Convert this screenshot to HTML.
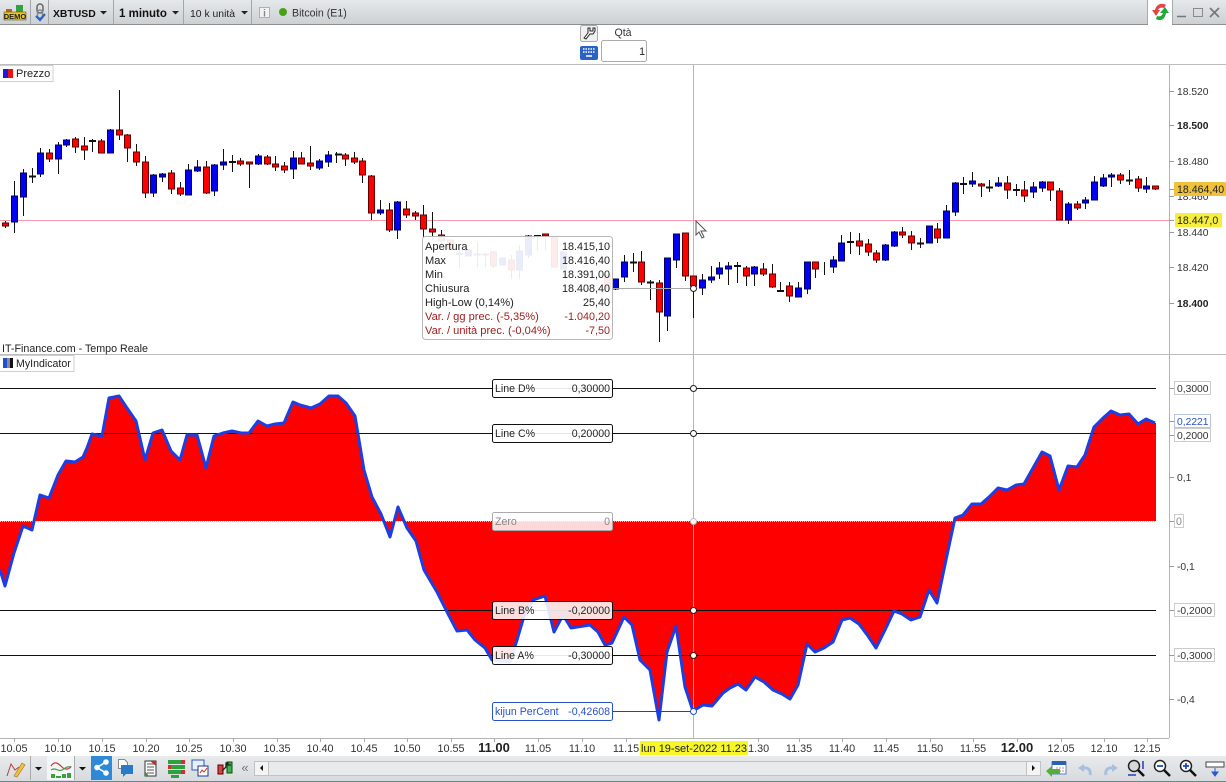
<!DOCTYPE html>
<html><head><meta charset="utf-8"><title>XBTUSD</title>
<style>
html,body{margin:0;padding:0;background:#fff;width:1226px;height:782px;overflow:hidden}
svg{display:block}
text{font-family:"Liberation Sans",sans-serif;font-size:10.6px;fill:#222}
.a{font-size:10.3px;fill:#333}
.t{text-anchor:middle;fill:#333;font-size:10.8px}
.b{font-weight:bold;font-size:13px;fill:#222}
.r{text-anchor:end}
.l{font-size:11.1px}
.v{font-size:10.8px;text-anchor:end}
.red{fill:#a02020}
</style></head><body>
<svg width="1226" height="782" viewBox="0 0 1226 782" xmlns="http://www.w3.org/2000/svg">
<defs>
<linearGradient id="g" x1="0" y1="0" x2="0" y2="1"><stop offset="0" stop-color="#e6e9eb"/><stop offset="1" stop-color="#cdd1d4"/></linearGradient>
<linearGradient id="g2" x1="0" y1="0" x2="0" y2="1"><stop offset="0" stop-color="#e8eaec"/><stop offset="1" stop-color="#d8dbde"/></linearGradient>
</defs>
<rect width="1226" height="782" fill="#fff"/>

<!-- top bar -->
<rect x="0" y="0" width="1226" height="24" fill="url(#g)"/>
<rect x="0" y="24" width="1226" height="1" fill="#8c8f91"/>
<path d="M30.500 0V24M48.500 0V24M113.500 0V24M183.500 0V24M251.500 0V24" stroke="#a4a7aa" fill="none"/>
<rect x="1148" y="0" width="24" height="26" fill="#fff"/>
<path d="M1147.500 0V24M1172.500 0V24" stroke="#a8abae"/>
<!-- demo logo -->
<rect x="6" y="9" width="6" height="5" fill="#a86a30"/><rect x="16" y="5" width="7" height="7" fill="#35a040"/>
<rect x="4" y="12" width="22" height="8" fill="#e8c428" stroke="#6a5a10" stroke-width=".6"/>
<text x="15" y="19" text-anchor="middle" style="font-size:7.500px;font-weight:bold;fill:#222">DEMO</text>
<!-- chain icon -->
<rect x="37" y="4" width="6" height="9" rx="3" fill="none" stroke="#666" stroke-width="1.500"/>
<rect x="37.500" y="10" width="5" height="8" rx="2.500" fill="none" stroke="#888" stroke-width="1.500"/>
<path d="M36 16l4 4 5-6" fill="none" stroke="#2e62c0" stroke-width="2.200"/>
<text x="53" y="17" style="font-weight:bold;fill:#111;font-size:10.400px">XBTUSD</text>
<path d="M100 11h7l-3.500 3.500z" fill="#222"/>
<text x="119" y="17" style="font-weight:bold;fill:#111;font-size:11.500px">1 minuto</text>
<path d="M172 11h7l-3.500 3.500z" fill="#222"/>
<text x="190" y="17" style="fill:#222;font-size:10.400px">10 k unità</text>
<path d="M241 11h7l-3.500 3.500z" fill="#222"/>
<rect x="259.500" y="7.500" width="10" height="10" fill="#f2f2f2" stroke="#b0b0b0"/>
<text x="264.500" y="16.500" text-anchor="middle" style="font-size:10px;font-weight:bold;fill:#888">i</text>
<circle cx="283" cy="12" r="4" fill="#4aa018"/>
<text x="292" y="16.500" style="fill:#333">Bitcoin (E1)</text>
<!-- refresh icon -->
<path d="M1166 5c-5-3-10 0-11 5l-3 0 4 6 4-6-2 0c1-2 3-3 6-2z" fill="#e04848"/>
<path d="M1156 19c5 3 9 0 10-6l3 0-4-6-5 6 3 0c-1 3-3 4-6 3z" fill="#22a83a"/>
<!-- window buttons -->
<path d="M1177 16.500h9" stroke="#777" stroke-width="1.500"/>
<rect x="1193.500" y="8.500" width="9" height="8" fill="none" stroke="#8a8a8a"/>
<path d="M1210 8l9 9M1219 8l-9 9" stroke="#777" stroke-width="1.700"/>

<!-- wrench / qty -->
<rect x="580.500" y="25.500" width="17" height="16" rx="2" fill="#f0f0f0" stroke="#aaa"/>
<path d="M584 38l4-5v-5h2v3h3v-3h2v3l-2 3h-3l-4 5z" fill="#fff" stroke="#222" stroke-width="1"/>
<text x="623" y="36" text-anchor="middle" style="fill:#333">Qtà</text>
<rect x="580" y="46" width="18" height="14" rx="2" fill="#2c62c4"/>
<path d="M583 49h12M583 52h12" stroke="#fff" stroke-width="1.500" stroke-dasharray="1.500 1"/><path d="M586 56h6" stroke="#fff" stroke-width="1.500"/>
<rect x="601.500" y="40.500" width="45" height="21" rx="2" fill="#fff" stroke="#aaa"/>
<text x="645" y="55" class="r" style="fill:#222">1</text>

<!-- frames -->
<path d="M0 64.500H1226M0 354.500H1226" stroke="#bdbdbd"/>
<path d="M1169.500 65V738M0 738.500H1169" stroke="#b4b4b4"/>
<path d="M1169 91.500h5M1169 125.500h5M1169 161.500h5M1169 196.500h5M1169 189.500h5M1169 232.500h5M1169 267.500h5M1169 303.500h5M1169 220.500h5M1169 388.500h5M1169 421.500h5M1169 435.500h5M1169 477.500h5M1169 521.500h5M1169 566.500h5M1169 610.500h5M1169 655.500h5M1169 699.500h5" stroke="#999"/>

<!-- price panel tags -->
<rect x="-1" y="65.500" width="54" height="16" fill="#fff" stroke="#cfcfcf"/>
<rect x="3" y="69" width="5" height="9" fill="#1a1ae0"/><rect x="8" y="69" width="5" height="9" fill="#f01010"/>
<text x="16" y="77" style="font-size:11px">Prezzo</text>

<!-- crosshair -->
<path d="M0 220.500H1169" stroke="#f59aaa"/>
<path d="M693.500 65V738" stroke="#f59aaa"/>

<!-- wicks -->
<path stroke="#111" stroke-width="1" fill="none" d="M5.500 221V228M14.500 181V233M23.500 169V216M32.500 168V183M40.500 148V177M49.500 149V162M58.500 142V174M66.500 139V147M75.500 137V153M84.500 137V160M92.500 139V152M101.500 139V153M110.500 129V153M119.500 90V140M127.500 134V162M136.500 144V166M145.500 156V198M153.500 174V197M162.500 173V182M171.500 170V194M180.500 182V196M188.500 164V195M197.500 160V172M206.500 161V194M214.500 164V196M223.500 149V170M232.500 155V172M240.500 158V166M249.500 162V188M258.500 154V165M267.500 155V165M275.500 156V171M284.500 162V173M293.500 151V179M301.500 152V164M310.500 146V170M319.500 159V170M328.500 151V167M336.500 152V163M345.500 153V166M354.500 152V164M362.500 158V183M371.500 175V220M380.500 200V215M389.500 203V232M397.500 201V239M406.500 201V218M415.500 211V220M423.500 205V237M432.500 212V240M441.500 230V245M459.500 248V268M477.500 242V267M485.500 254V267M493.500 251V268M511.500 255V279M519.500 245V279M528.500 235V258M537.500 235V250M545.500 234V250M615.500 279V290M624.500 255V282M633.500 253V272M641.500 251V285M650.500 280V300M659.500 280V342M667.500 258V331M676.500 234V268M685.500 233V281M693.500 276V318M702.500 274V295M711.500 266V283M719.500 262V279M728.500 262V285M737.500 262V283M746.500 266V286M754.500 266V286M763.500 263V276M772.500 264V288M780.500 282V292M789.500 282V302M798.500 282V297M807.500 262V294M815.500 262V278M824.500 262V275M833.500 256V273M841.500 235V261M850.500 232V254M859.500 233V255M868.500 239V256M876.500 250V263M885.500 244V261M894.500 231V247M902.500 227V238M911.500 231V250M920.500 238V248M929.500 226V243M937.500 223V243M946.500 205V238M955.500 182V216M963.500 177V194M972.500 172V187M981.500 183V197M989.500 180V192M998.500 177V187M1007.500 176V199M1016.500 184V196M1024.500 181V202M1033.500 182V198M1042.500 181V192M1050.500 182V201M1059.500 188V220M1068.500 202V224M1077.500 201V210M1085.500 197V209M1094.500 176V200M1103.500 174V187M1111.500 173V187M1120.500 173V184M1129.500 170V185M1138.500 176V192M1146.500 177V193M1155.500 186V190"/>
<!-- doji -->
<path stroke="#111" stroke-width="2" fill="none" d="M29 176.500h7M89 141h7M229 162h7M335 154.500h7M847 242h7M917 243.500h7M960 184h7M986 187.500h7M1013 190h7M1126 180.500h7M777 291h7M734 266h7M630 262.500h7M647 282.500h7M456 254h7M474 254.500h7M482 254.500h7M534 236h7"/>
<!-- red bodies -->
<path fill="#ff0000" stroke="#600000" stroke-width="1" d="M2.500 223h6v3h-6zM46.500 153h6v6h-6zM72.500 139h6v8h-6zM81.500 146h6v4h-6zM98.500 141h6v12h-6zM116.500 130h6v5h-6zM124.500 135h6v13h-6zM133.500 152h6v10h-6zM142.500 162h6v31h-6zM168.500 173h6v16h-6zM177.500 188h6v6h-6zM203.500 167h6v26h-6zM237.500 161h6v3h-6zM246.500 162h6v2h-6zM264.500 157h6v7h-6zM272.500 164h6v3h-6zM281.500 166h6v4h-6zM298.500 158h6v6h-6zM307.500 163h6v3h-6zM342.500 155h6v4h-6zM351.500 158h6v4h-6zM359.500 161h6v14h-6zM368.500 176h6v37h-6zM386.500 210h6v20h-6zM403.500 209h6v6h-6zM412.500 213h6v3h-6zM420.500 215h6v14h-6zM429.500 229h6v3h-6zM438.500 235h6v6h-6zM447.500 240h6v9h-6zM490.500 252h6v14h-6zM508.500 260h6v10h-6zM542.500 234h6v2h-6zM551.500 237h6v30h-6zM604.500 275h6v14h-6zM638.500 262h6v20h-6zM656.500 283h6v29h-6zM682.500 233h6v43h-6zM690.500 276h6v10h-6zM743.500 268h6v8h-6zM760.500 269h6v5h-6zM769.500 274h6v13h-6zM786.500 286h6v10h-6zM812.500 262h6v7h-6zM856.500 241h6v5h-6zM865.500 244h6v8h-6zM873.500 253h6v7h-6zM899.500 232h6v3h-6zM908.500 236h6v7h-6zM934.500 229h6v9h-6zM978.500 184h6v2h-6zM1004.500 183h6v7h-6zM1021.500 190h6v6h-6zM1047.500 182h6v8h-6zM1056.500 191h6v29h-6zM1074.500 204h6v4h-6zM1117.500 175h6v5h-6zM1135.500 179h6v9h-6zM1152.500 186h6v3h-6z"/>
<!-- blue bodies -->
<path fill="#0000f0" stroke="#000060" stroke-width="1" d="M11.500 196h6v26h-6zM20.500 173h6v24h-6zM37.500 153h6v21h-6zM55.500 145h6v14h-6zM63.500 140h6v5h-6zM107.500 130h6v23h-6zM150.500 175h6v18h-6zM159.500 174h6v3h-6zM185.500 170h6v25h-6zM194.500 167h6v4h-6zM211.500 165h6v26h-6zM220.500 162h6v3h-6zM255.500 156h6v8h-6zM290.500 158h6v11h-6zM316.500 161h6v7h-6zM325.500 155h6v7h-6zM377.500 210h6v3h-6zM394.500 202h6v28h-6zM465.500 250h6v6h-6zM499.500 258h6v7h-6zM516.500 251h6v19h-6zM525.500 236h6v19h-6zM560.500 252h6v17h-6zM612.500 279h6v10h-6zM621.500 262h6v15h-6zM664.500 258h6v58h-6zM673.500 234h6v26h-6zM699.500 280h6v8h-6zM708.500 277h6v3h-6zM716.500 268h6v6h-6zM725.500 266h6v3h-6zM751.500 267h6v7h-6zM795.500 288h6v9h-6zM804.500 262h6v27h-6zM830.500 260h6v7h-6zM838.500 243h6v18h-6zM882.500 245h6v15h-6zM891.500 232h6v14h-6zM926.500 226h6v17h-6zM943.500 211h6v27h-6zM952.500 183h6v29h-6zM969.500 181h6v3h-6zM995.500 183h6v3h-6zM1030.500 187h6v5h-6zM1039.500 182h6v6h-6zM1065.500 204h6v16h-6zM1082.500 200h6v3h-6zM1091.500 182h6v18h-6zM1100.500 178h6v8h-6zM1108.500 175h6v2h-6zM1143.500 186h6v3h-6z"/>

<!-- tooltip -->
<rect x="422.500" y="236.500" width="190" height="103" rx="3" fill="#fff" fill-opacity=".92" stroke="#b8b8b8"/>
<path d="M612 288.500H693" stroke="#aaa"/>
<circle cx="693.500" cy="288.500" r="3" fill="#fff" stroke="#222"/>
<text x="425" y="250" class="l">Apertura</text><text x="610" y="250" class="v">18.415,10</text>
<text x="425" y="264" class="l">Max</text><text x="610" y="264" class="v">18.416,40</text>
<text x="425" y="278" class="l">Min</text><text x="610" y="278" class="v">18.391,00</text>
<text x="425" y="292" class="l">Chiusura</text><text x="610" y="292" class="v">18.408,40</text>
<text x="425" y="306" class="l">High-Low (0,14%)</text><text x="610" y="306" class="v">25,40</text>
<text x="425" y="320" class="l red">Var. / gg prec. (-5,35%)</text><text x="610" y="320" class="v red">-1.040,20</text>
<text x="425" y="334" class="l red">Var. / unità prec. (-0,04%)</text><text x="610" y="334" class="v red">-7,50</text>
<!-- cursor -->
<path d="M696 221v14l3-3 3 6 2-1-3-6h5z" fill="#fff" stroke="#555"/>

<text x="2" y="352" style="font-size:10.700px">IT-Finance.com - Tempo Reale</text>

<!-- axis price labels -->
<text x="1177" y="95" class="a">18.520</text>
<text x="1177" y="129" class="a" style="font-weight:bold;fill:#222">18.500</text>
<text x="1177" y="165" class="a">18.480</text>
<text x="1177" y="200" class="a">18.460</text>
<text x="1177" y="236" class="a">18.440</text>
<text x="1177" y="271" class="a">18.420</text>
<text x="1177" y="307" class="a" style="font-weight:bold;fill:#222">18.400</text>
<rect x="1174" y="182" width="52" height="14" rx="1" fill="#f0c23c"/>
<text x="1177" y="193" style="fill:#222">18.464,40</text>
<rect x="1175" y="213" width="47" height="14" rx="1" fill="#f6ee3c"/>
<text x="1177" y="224" style="fill:#222">18.447,0</text>

<!-- indicator -->
<rect x="-1" y="355.500" width="75" height="16" fill="#fff" stroke="#cfcfcf"/>
<rect x="3" y="358" width="4" height="10" fill="#2050d0"/><rect x="7" y="358" width="3" height="10" fill="#8a8a9a"/><rect x="10" y="358" width="3" height="10" fill="#111"/>
<text x="16" y="367">MyIndicator</text>

<polygon fill="#ff0000" points="0,521 0,570 5,586 14,553 23,526 32,530 40,495 49,498 58,475 66,461 75,462 83,457 87,448 92,434 102,436 109,398 119,396 127,408 136,421 145,460 153,433 162,430 171,451 180,460 187,435 197,435 206,468 214,436 223,433 232,431 241,433 249,433 258,421 267,426 275,424 284,423 293,402 300,405 311,408 320,404 329,396 338,396 346,403 355,416 364,470 372,497 381,514 390,537 398,507 407,528 416,541 424,570 437,592 447,612 457,631 467,630 475,640 485,648 492,660 510,662 517,640 525,613 533,600 545,596 554,632 563,615 571,628 590,625 598,632 605,645 612,643 624,617 632,625 640,660 650,670 659,720 667,652 676,626 685,687 693,711 703,705 712,706 723,693 730,688 738,684 746,690 755,677 764,682 773,690 782,694 790,699 798,685 807,644 815,652 824,648 833,642 842,620 850,618 859,624 868,636 876,648 885,630 894,611 902,614 911,620 920,617 929,590 937,603 946,560 955,518 963,515 972,504 981,504 989,497 998,488 1007,490 1016,485 1024,484 1033,468 1042,452 1050,456 1059,490 1068,466 1077,467 1085,455 1094,427 1103,418 1111,411 1120,415 1129,414 1138,424 1146,419 1155,423 1156,423 1156,521"/>
<path d="M0 521.500H1156" stroke="#f6b8b8" stroke-dasharray="1 1"/>
<path d="M0 388.500H1156M0 433.500H1156M0 610.500H1156M0 655.500H1156" stroke="#111"/>
<polyline fill="none" stroke="#1c3fe4" stroke-width="3" stroke-linejoin="round" points="0,570 5,586 14,553 23,526 32,530 40,495 49,498 58,475 66,461 75,462 83,457 87,448 92,434 102,436 109,398 119,396 127,408 136,421 145,460 153,433 162,430 171,451 180,460 187,435 197,435 206,468 214,436 223,433 232,431 241,433 249,433 258,421 267,426 275,424 284,423 293,402 300,405 311,408 320,404 329,396 338,396 346,403 355,416 364,470 372,497 381,514 390,537 398,507 407,528 416,541 424,570 437,592 447,612 457,631 467,630 475,640 485,648 492,660 510,662 517,640 525,613 533,600 545,596 554,632 563,615 571,628 590,625 598,632 605,645 612,643 624,617 632,625 640,660 650,670 659,720 667,652 676,626 685,687 693,711 703,705 712,706 723,693 730,688 738,684 746,690 755,677 764,682 773,690 782,694 790,699 798,685 807,644 815,652 824,648 833,642 842,620 850,618 859,624 868,636 876,648 885,630 894,611 902,614 911,620 920,617 929,590 937,603 946,560 955,518 963,515 972,504 981,504 989,497 998,488 1007,490 1016,485 1024,484 1033,468 1042,452 1050,456 1059,490 1068,466 1077,467 1085,455 1094,427 1103,418 1111,411 1120,415 1129,414 1138,424 1146,419 1155,423"/>
<path d="M612 711.500H693" stroke="#1c3fd0"/>
<path d="M693.500 354V738" stroke="#f59aaa" stroke-opacity=".9"/>

<!-- labels -->
<g>
<rect x="492.500" y="379.500" width="120" height="18" rx="2" fill="#fff" fill-opacity=".9" stroke="#111"/>
<text x="495" y="392">Line D%</text><text x="610" y="392" class="r">0,30000</text>
<rect x="492.500" y="424.500" width="120" height="18" rx="2" fill="#fff" fill-opacity=".9" stroke="#111"/>
<text x="495" y="437">Line C%</text><text x="610" y="437" class="r">0,20000</text>
<rect x="492.500" y="512.500" width="120" height="18" rx="2" fill="#fff" fill-opacity=".85" stroke="#aaa"/>
<text x="495" y="525" style="fill:#888">Zero</text><text x="610" y="525" class="r" style="fill:#888">0</text>
<rect x="492.500" y="601.500" width="120" height="18" rx="2" fill="#fff" fill-opacity=".87" stroke="#111"/>
<text x="495" y="614">Line B%</text><text x="610" y="614" class="r">-0,20000</text>
<rect x="492.500" y="646.500" width="120" height="18" rx="2" fill="#fff" fill-opacity=".9" stroke="#111"/>
<text x="495" y="659">Line A%</text><text x="610" y="659" class="r">-0,30000</text>
<rect x="492.500" y="702.500" width="120" height="18" rx="2" fill="#fff" stroke="#2a50c8"/>
<text x="495" y="715" style="fill:#2a50c8">kijun PerCent</text><text x="610" y="715" class="r" style="fill:#2a50c8">-0,42608</text>
</g>
<g fill="#fff" stroke="#222">
<circle cx="693.500" cy="388.500" r="3"/><circle cx="693.500" cy="433.500" r="3"/><circle cx="693.500" cy="610.500" r="3"/><circle cx="693.500" cy="655.500" r="3"/>
<circle cx="693.500" cy="521.500" r="3" stroke="#bbb"/><circle cx="693.500" cy="711.500" r="3" stroke="#2a50c8"/>
</g>

<!-- indicator axis labels -->
<rect x="1174.500" y="381.500" width="36" height="13" fill="#fff" stroke="#ccc"/><text x="1177" y="392" class="a">0,3000</text>
<rect x="1174.500" y="414.500" width="36" height="13" fill="#fff" stroke="#b8c4e0"/><text x="1177" y="425" class="a" style="fill:#2a50c8">0,2221</text>
<rect x="1174.500" y="428.500" width="36" height="13" fill="#fff" stroke="#ccc"/><text x="1177" y="439" class="a">0,2000</text>
<text x="1177" y="481" class="a">0,1</text>
<rect x="1174.500" y="514.500" width="9" height="13" fill="#fff" stroke="#ccc"/><text x="1176" y="525" style="fill:#888">0</text>
<text x="1177" y="570" class="a">-0,1</text>
<rect x="1174.500" y="603.500" width="40" height="13" fill="#fff" stroke="#ccc"/><text x="1177" y="614" class="a">-0,2000</text>
<rect x="1174.500" y="648.500" width="40" height="13" fill="#fff" stroke="#ccc"/><text x="1177" y="659" class="a">-0,3000</text>
<text x="1177" y="703" class="a">-0,4</text>

<!-- time axis -->
<path stroke="#aaa" d="M14.500 738v4M58.500 738v4M102.500 738v4M146.500 738v4M189.500 738v4M233.500 738v4M277.500 738v4M320.500 738v4M364.500 738v4M407.500 738v4M451.500 738v4M494.500 738v4M538.500 738v4M582.500 738v4M626.500 738v4M758.500 738v4M799.500 738v4M842.500 738v4M886.500 738v4M930.500 738v4M973.500 738v4M1017.500 738v4M1061.500 738v4M1104.500 738v4M1147.500 738v4"/>
<g>
<text x="14" y="752" class="t">10.05</text><text x="58" y="752" class="t">10.10</text><text x="102" y="752" class="t">10.15</text><text x="146" y="752" class="t">10.20</text><text x="189" y="752" class="t">10.25</text><text x="233" y="752" class="t">10.30</text><text x="277" y="752" class="t">10.35</text><text x="320" y="752" class="t">10.40</text><text x="364" y="752" class="t">10.45</text><text x="407" y="752" class="t">10.50</text><text x="451" y="752" class="t">10.55</text>
<text x="494" y="752" class="t b">11.00</text>
<text x="538" y="752" class="t">11.05</text><text x="582" y="752" class="t">11.10</text><text x="626" y="752" class="t">11.15</text>
<text x="756" y="752" class="t">11.30</text><text x="799" y="752" class="t">11.35</text><text x="842" y="752" class="t">11.40</text><text x="886" y="752" class="t">11.45</text><text x="930" y="752" class="t">11.50</text><text x="973" y="752" class="t">11.55</text>
<text x="1017" y="752" class="t b">12.00</text>
<text x="1061" y="752" class="t">12.05</text><text x="1104" y="752" class="t">12.10</text><text x="1147" y="752" class="t">12.15</text>
</g>
<rect x="640" y="741" width="108" height="14" fill="#f6f628"/>
<text x="641" y="752" textLength="106" lengthAdjust="spacingAndGlyphs" style="fill:#222;font-size:11px">lun 19-set-2022 11.23</text>

<!-- bottom toolbar -->
<rect x="0" y="756" width="1226" height="25" fill="url(#g2)"/>
<rect x="0" y="781" width="1226" height="1" fill="#6a8a8a"/>
<rect x="47" y="756" width="28" height="24" fill="#f4f5f6"/>
<rect x="91" y="756" width="21" height="24" fill="#2e8ad8"/>
<path d="M30.500 756V780M74.500 756V780" stroke="#a8abae"/>
<!-- pencil -->
<path d="M7 776l4-12 4 6 4-3" fill="none" stroke="#b04040"/><path d="M14 776l8-13 3 2-8 12z" fill="#f0c040" stroke="#a07020" stroke-width=".6"/>
<path d="M35 767h7l-3.500 3.500z" fill="#111"/>
<!-- indicators icon -->
<path d="M51 766c4-6 8-2 11 1s7 3 9-1" fill="none" stroke="#c04040" stroke-width="1.200"/>
<path d="M51 770c4-3 8 2 11 0s7-5 9-2" fill="none" stroke="#40a050" stroke-width="1.200"/>
<path d="M51 778v-4h4v4zM56 778v-2h5v2zM62 778v-4h4v4zM67 778v-5h4v5z" fill="#3aa040"/>
<path d="M79 767h7l-3.500 3.500z" fill="#111"/>
<!-- share -->
<path d="M106 762l-9 5.500 9 5.500" fill="none" stroke="#fff" stroke-width="1.600"/>
<circle cx="97" cy="767.500" r="2.800" fill="#fff"/><circle cx="106" cy="762" r="2.800" fill="#fff"/><circle cx="106" cy="773" r="2.800" fill="#fff"/>
<!-- chat doc -->
<path d="M118.500 759.500h6l3 3v6h-9z" fill="#fff" stroke="#888"/>
<path d="M121 765h12v9h-7l-3 3v-3h-2z" fill="#2a7ac8"/>
<!-- list icon -->
<rect x="145" y="761" width="11" height="15" fill="#fff" stroke="#333"/><path d="M147 764h7M147 767h7M147 770h7M147 773h7" stroke="#555"/><path d="M150 761h6v5z" fill="#c03030"/><path d="M145 776v-5l4 5z" fill="#2a9a40"/>
<!-- green bricks -->
<path d="M168 760h13v4h-13zM171 765h14v4h-14zM168 770h13v4h-13zM171 775h8v3h-8z" fill="#2ea040"/><path d="M181 760h4v4h-4zM168 765h3v4h-3zM181 770h4v4h-4z" fill="#d03030"/>
<!-- windows -->
<rect x="192" y="760" width="12" height="10" fill="#e8f0fa" stroke="#2a5ab0"/><rect x="198" y="766" width="10" height="10" fill="#fff" stroke="#1a3a90"/><path d="M200 773l2-3 2 2 3-4" stroke="#c03030" fill="none"/>
<!-- candle wrench -->
<rect x="218" y="765" width="5" height="9" fill="#e04040" stroke="#500"/><rect x="227" y="762" width="5" height="11" fill="#40b050" stroke="#050"/><path d="M222 771l4-4v-4h2v2h3" fill="none" stroke="#222" stroke-width="1.300"/>
<text x="245" y="772" text-anchor="middle" style="font-size:13px;fill:#777">«</text>
<!-- scrollbar -->
<rect x="254.500" y="761.500" width="786" height="14" fill="#e8eaec" stroke="#c0c2c4"/>
<rect x="254.500" y="761.500" width="14" height="14" fill="#f4f4f4" stroke="#c0c2c4"/>
<rect x="1026.500" y="761.500" width="14" height="14" fill="#f4f4f4" stroke="#c0c2c4"/>
<path d="M263 765v6l-3-3z" fill="#111"/><path d="M1032 765v6l3-3z" fill="#111"/>
<!-- calendar arrow -->
<rect x="1052" y="762" width="14" height="12" fill="#fff" stroke="#5a80c0"/><rect x="1052" y="761" width="14" height="4" fill="#2a62b0"/><path d="M1056 768h9M1056 771h9" stroke="#c09090" stroke-dasharray="2 1"/>
<path d="M1046 771l6-5v3h8v5h-8v3z" fill="#52b03a"/>
<!-- undo/redo -->
<path d="M1090 775c1-4-1-8-7-7" fill="none" stroke="#a8c0e0" stroke-width="3"/><path d="M1078 768l6-4v8z" fill="#a8c0e0"/>
<path d="M1106 775c-1-4 1-8 7-7" fill="none" stroke="#a8c0e0" stroke-width="3"/><path d="M1118 768l-6-4v8z" fill="#a8c0e0"/>
<!-- zooms -->
<circle cx="1134" cy="766" r="5.500" fill="#d8d8d8" stroke="#222" stroke-width="1.500"/><path d="M1138 770l6 6" stroke="#111" stroke-width="2.500"/><path d="M1143 761v8" stroke="#1a40c0" stroke-width="1.500"/><path d="M1128 775h8" stroke="#1a40c0" stroke-width="1.500"/>
<circle cx="1160" cy="766" r="5.500" fill="#fff" stroke="#222" stroke-width="1.500"/><path d="M1164 770l6 6" stroke="#111" stroke-width="2.500"/><path d="M1157 766h6" stroke="#1a40c0" stroke-width="1.700"/>
<circle cx="1186" cy="766" r="5.500" fill="#fff" stroke="#222" stroke-width="1.500"/><path d="M1190 770l6 6" stroke="#111" stroke-width="2.500"/><path d="M1183 766h6M1186 763v6" stroke="#1a40c0" stroke-width="1.700"/>
<rect x="1206" y="762" width="18" height="5" fill="#fff" stroke="#444"/><path d="M1215 768v5M1212 772h6l-3 4z" fill="#2a5ac8" stroke="#2a5ac8"/>
</svg>
</body></html>
